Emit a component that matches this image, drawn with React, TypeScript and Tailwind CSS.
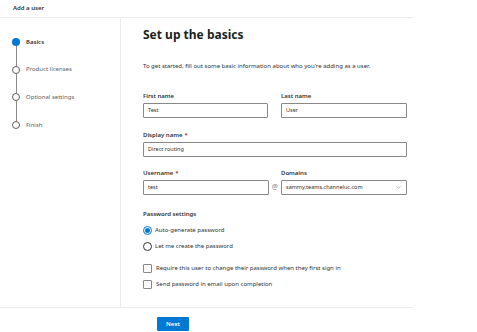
import { ChevronDown } from 'lucide-react';

const steps = ['Basics', 'Product licenses', 'Optional settings', 'Finish'];

function Field({ label, required, value }: { label: string; required?: boolean; value: string }) {
  return (
    <div className="flex flex-col">
      <div className="h-[8px] flex items-center text-[6px] font-semibold text-[#323130]">
        {label}
        {required && <span className="ml-[2px] text-[#a4262c]">*</span>}
      </div>
      <div className="mt-[3px] h-[15px] border border-[#8a8886] rounded-[1px] flex items-center px-[4px] text-[5.5px] text-[#323130]">
        {value}
      </div>
    </div>
  );
}

function Radio({ checked, label }: { checked?: boolean; label: string }) {
  return (
    <div className="h-[10px] flex items-center gap-[3px]">
      <div
        className={
          checked
            ? 'w-[9px] h-[9px] rounded-full border border-[#0078d4] flex items-center justify-center'
            : 'w-[9px] h-[9px] rounded-full border border-[#323130]'
        }
      >
        {checked && <div className="w-[5px] h-[5px] rounded-full bg-[#0078d4]" />}
      </div>
      <span className="text-[6px] text-[#323130]">{label}</span>
    </div>
  );
}

function Check({ label }: { label: string }) {
  return (
    <div className="h-[10px] flex items-center gap-[4px]">
      <div className="w-[9px] h-[9px] rounded-[1px] border border-[#8a8886]" />
      <span className="text-[6px] text-[#323130]">{label}</span>
    </div>
  );
}

export default function App() {
  return (
    <div className="w-[477px] h-[332px] bg-white overflow-hidden" style={{ fontFamily: '"Noto Sans", "Open Sans", sans-serif' }}>
      <div className="w-[413px]">
        <header className="h-[18px] border-b border-[#edebe9] px-[13px] flex items-center">
          <span className="text-[6px] font-semibold text-[#323130]">Add a user</span>
        </header>

        <div className="flex h-[290px] border-b border-[#edebe9]">
          <nav className="w-[121px] border-r border-[#edebe9] pt-[20px] pl-[12px]">
            {steps.map((s, i) => (
              <div key={s} className="flex flex-col">
                <div className="flex items-center h-[8px] gap-[6px]">
                  <div
                    className={
                      i === 0
                        ? 'w-[8px] h-[8px] rounded-full bg-[#0078d4]'
                        : 'w-[8px] h-[8px] rounded-full border border-[#605e5c] bg-white'
                    }
                  />
                  <span className={i === 0 ? 'text-[6px] font-semibold text-[#323130]' : 'text-[6px] text-[#605e5c]'}>{s}</span>
                </div>
                {i < steps.length - 1 && <div className="ml-[3.5px] w-px h-[19.7px] bg-[#8a8886]" />}
              </div>
            ))}
          </nav>

          <main className="flex-1 pl-[22px] pt-[10px] flex flex-col">
            <h1 className="h-[14px] flex items-center text-[12px] font-bold text-[#201f1e]">Set up the basics</h1>
            <p className="mt-[20px] h-[8px] flex items-center text-[6px] text-[#323130]">
              To get started, fill out some basic information about who you're adding as a user.
            </p>

            <div className="mt-[22px] grid grid-cols-[125px_126px] gap-x-[13px] w-[264px]">
              <Field label="First name" value="Test" />
              <Field label="Last name" value="User" />
            </div>

            <div className="mt-[13px] w-[264px]">
              <Field label="Display name" required value="Direct routing" />
            </div>

            <div className="mt-[12px] flex items-end w-[264px]">
              <div className="w-[126px]">
                <Field label="Username" required value="test" />
              </div>
              <div className="w-[12px] h-[15px] flex items-center justify-center text-[7px] text-[#8a8886]">@</div>
              <div className="flex-1 flex flex-col">
                <div className="h-[8px] flex items-center text-[6px] font-semibold text-[#323130]">Domains</div>
                <div className="mt-[3px] h-[15px] border border-[#8a8886] rounded-[1px] flex items-center justify-between px-[4px] text-[5.5px] text-[#323130]">
                  <span>sammy.teams.channeluc.com</span>
                  <ChevronDown className="w-[7px] h-[7px] text-[#605e5c]" strokeWidth={1.5} />
                </div>
              </div>
            </div>

            <div className="mt-[15px] h-[8px] flex items-center text-[6px] font-semibold text-[#323130]">Password settings</div>
            <div className="mt-[7px] flex flex-col gap-[6px]">
              <Radio checked label="Auto-generate password" />
              <Radio label="Let me create the password" />
            </div>
            <div className="mt-[12px] flex flex-col gap-[6px]">
              <Check label="Require this user to change their password when they first sign in" />
              <Check label="Send password in email upon completion" />
            </div>
          </main>
        </div>

        <div className="pl-[157px] pt-[9px]">
          <button className="w-[32px] h-[14px] bg-[#0078d4] rounded-[1px] text-white text-[6px] font-semibold flex items-center justify-center">
            Next
          </button>
        </div>
      </div>
    </div>
  );
}
